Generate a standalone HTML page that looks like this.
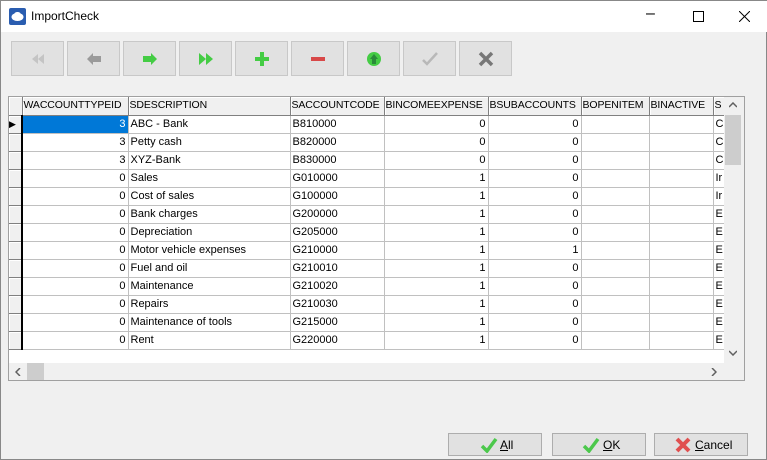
<!DOCTYPE html>
<html><head><style>
*{box-sizing:border-box;margin:0;padding:0}
body{width:767px;height:460px;background:#f0f0f0;font-family:"Liberation Sans",sans-serif;font-size:11px;position:relative;overflow:hidden;border:1px solid #888}
.title{position:absolute;left:0;top:0;width:767px;height:31px;background:#fff}
.title span{position:absolute;left:30px;top:8px;font-size:12px}
.tb{position:absolute;top:40px;width:53px;height:35px;background:#e1e1e1;border:1px solid #c8c8c8}
.tb svg{position:absolute;left:16px;top:9px}
.grid{position:absolute;left:7px;top:95px;width:737px;height:285px;border:1px solid #a0a0a0;background:#f0f0f0}
.inner{position:absolute;left:0;top:0;width:715px;height:266px;background:#fff;overflow:hidden}
table{border-collapse:collapse;table-layout:fixed;position:absolute;left:0;top:0;width:726px}
td{height:18px;border-right:1px solid #c0c0c0;border-bottom:1px solid #c0c0c0;padding:0 2px;white-space:nowrap;overflow:hidden;line-height:17px}
tr.h td{background:#f0f0f0;border-right:1px solid #808080;border-bottom:1px solid #808080;box-shadow:inset 1px 1px #fff;padding:0 1px;font-size:10.5px;letter-spacing:-0.1px}
td.i{background:#f0f0f0;border-right:2px solid #000;box-shadow:inset 1px 1px #fff;border-bottom:1px solid #808080}
td.r{text-align:right}
td.sel{background:#0078d7;color:#fff}
.vs{position:absolute;left:715px;top:0;width:20px;height:266px;background:#f0f0f0}
.hs{position:absolute;left:0;top:266px;width:715px;height:17px;background:#f0f0f0}
.btn{position:absolute;top:432px;width:94px;height:23px;background:#e1e1e1;border:1px solid #adadad;font-size:12px}
.btn span{position:absolute;top:4px}
</style></head><body>
<div class="title">
<svg style="position:absolute;left:8px;top:7px" width="17" height="17"><rect width="17" height="17" rx="2" fill="#2a5db0"/><ellipse cx="8.5" cy="9" rx="6" ry="4" fill="#fff"/><rect x="5" y="4" width="7" height="6" rx="3" fill="#fff"/></svg>
<span>ImportCheck</span>
<span style="left:645px;top:4px;font-size:16px">&#8211;</span>
<svg style="position:absolute;left:692px;top:10px" width="11" height="11"><rect x=".5" y=".5" width="10" height="10" fill="none" stroke="#000"/></svg>
<svg style="position:absolute;left:738px;top:10px" width="11" height="11"><path d="M0 0L11 11M11 0L0 11" stroke="#000"/></svg>
</div>
<div class="tb" style="left:10px"><svg width="20" height="16"><path d="M10 3L4 8L10 13ZM16 3L10 8L16 13Z" fill="#c4c4c4"/></svg></div>
<div class="tb" style="left:66px"><svg width="20" height="16"><path d="M3 8L9 2V5H17V11H9V14Z" fill="#9a9a9a"/></svg></div>
<div class="tb" style="left:122px"><svg width="20" height="16"><path d="M17 8L11 2V5H3V11H11V14Z" fill="#44cc44"/></svg></div>
<div class="tb" style="left:178px"><svg width="20" height="16"><path d="M3 2L10 8L3 14ZM10 2L17 8L10 14Z" fill="#44cc44"/></svg></div>
<div class="tb" style="left:234px"><svg width="20" height="16"><path d="M8 1H12V6H17V10H12V15H8V10H3V6H8Z" fill="#44cc44"/></svg></div>
<div class="tb" style="left:290px"><svg width="20" height="16"><rect x="3" y="6" width="14" height="4" fill="#d84848"/></svg></div>
<div class="tb" style="left:346px"><svg width="20" height="16"><circle cx="10" cy="8" r="7" fill="#44cc44"/><path d="M10 3L14 8H12V13H8V8H6Z" fill="#2a8a3a"/></svg></div>
<div class="tb" style="left:402px"><svg width="20" height="16"><path d="M3 9L7 13L17 2" stroke="#b8b8b8" stroke-width="2.5" fill="none"/></svg></div>
<div class="tb" style="left:458px"><svg width="20" height="16"><path d="M4 2L16 14M16 2L4 14" stroke="#777" stroke-width="3.5"/></svg></div>
<div class="grid"><div class="inner"><table>
<colgroup><col style="width:13px"><col style="width:106px"><col style="width:162px"><col style="width:94px"><col style="width:104px"><col style="width:93px"><col style="width:68px"><col style="width:64px"><col style="width:22px"></colgroup>
<tr class="h"><td></td><td>WACCOUNTTYPEID</td><td>SDESCRIPTION</td><td>SACCOUNTCODE</td><td>BINCOMEEXPENSE</td><td>BSUBACCOUNTS</td><td>BOPENITEM</td><td>BINACTIVE</td><td>S</td></tr>
<tr><td class="i" style="font-size:9px;padding:0">&#9654;</td><td class="r sel">3</td><td>ABC - Bank</td><td>B810000</td><td class="r">0</td><td class="r">0</td><td></td><td></td><td>C</td></tr>
<tr><td class="i"></td><td class="r">3</td><td>Petty cash</td><td>B820000</td><td class="r">0</td><td class="r">0</td><td></td><td></td><td>C</td></tr>
<tr><td class="i"></td><td class="r">3</td><td>XYZ-Bank</td><td>B830000</td><td class="r">0</td><td class="r">0</td><td></td><td></td><td>C</td></tr>
<tr><td class="i"></td><td class="r">0</td><td>Sales</td><td>G010000</td><td class="r">1</td><td class="r">0</td><td></td><td></td><td>Ir</td></tr>
<tr><td class="i"></td><td class="r">0</td><td>Cost of sales</td><td>G100000</td><td class="r">1</td><td class="r">0</td><td></td><td></td><td>Ir</td></tr>
<tr><td class="i"></td><td class="r">0</td><td>Bank charges</td><td>G200000</td><td class="r">1</td><td class="r">0</td><td></td><td></td><td>E</td></tr>
<tr><td class="i"></td><td class="r">0</td><td>Depreciation</td><td>G205000</td><td class="r">1</td><td class="r">0</td><td></td><td></td><td>E</td></tr>
<tr><td class="i"></td><td class="r">0</td><td>Motor vehicle expenses</td><td>G210000</td><td class="r">1</td><td class="r">1</td><td></td><td></td><td>E</td></tr>
<tr><td class="i"></td><td class="r">0</td><td>Fuel and oil</td><td>G210010</td><td class="r">1</td><td class="r">0</td><td></td><td></td><td>E</td></tr>
<tr><td class="i"></td><td class="r">0</td><td>Maintenance</td><td>G210020</td><td class="r">1</td><td class="r">0</td><td></td><td></td><td>E</td></tr>
<tr><td class="i"></td><td class="r">0</td><td>Repairs</td><td>G210030</td><td class="r">1</td><td class="r">0</td><td></td><td></td><td>E</td></tr>
<tr><td class="i"></td><td class="r">0</td><td>Maintenance of tools</td><td>G215000</td><td class="r">1</td><td class="r">0</td><td></td><td></td><td>E</td></tr>
<tr><td class="i"></td><td class="r">0</td><td>Rent</td><td>G220000</td><td class="r">1</td><td class="r">0</td><td></td><td></td><td>E</td></tr>
</table></div>
<div class="vs"><svg style="position:absolute;left:5px;top:5px" width="8" height="6"><path d="M0 5L4 1L8 5" stroke="#606060" stroke-width="1.5" fill="none"/></svg>
<div style="position:absolute;left:1px;top:18px;width:16px;height:50px;background:#cdcdcd"></div>
<svg style="position:absolute;left:5px;top:253px" width="8" height="6"><path d="M0 1L4 5L8 1" stroke="#606060" stroke-width="1.5" fill="none"/></svg></div>
<div class="hs"><svg style="position:absolute;left:6px;top:5px" width="6" height="8"><path d="M5 0L1 4L5 8" stroke="#606060" stroke-width="1.5" fill="none"/></svg>
<div style="position:absolute;left:18px;top:0;width:17px;height:17px;background:#cdcdcd"></div>
<svg style="position:absolute;left:702px;top:5px" width="6" height="8"><path d="M1 0L5 4L1 8" stroke="#606060" stroke-width="1.5" fill="none"/></svg></div>
</div>
<div class="btn" style="left:447px"><svg style="position:absolute;left:31px;top:3px" width="18" height="16"><path d="M2 9L7 14L16 2" stroke="#4cc84c" stroke-width="3.5" fill="none"/></svg><span style="left:51px"><u>A</u>ll</span></div>
<div class="btn" style="left:551px"><svg style="position:absolute;left:29px;top:3px" width="18" height="16"><path d="M2 9L7 14L16 2" stroke="#4cc84c" stroke-width="3.5" fill="none"/></svg><span style="left:50px"><u>O</u>K</span></div>
<div class="btn" style="left:653px"><svg style="position:absolute;left:20px;top:3px" width="16" height="16"><path d="M2 2L14 14M14 2L2 14" stroke="#e05050" stroke-width="4"/></svg><span style="left:40px"><u>C</u>ancel</span></div>
</body></html>
